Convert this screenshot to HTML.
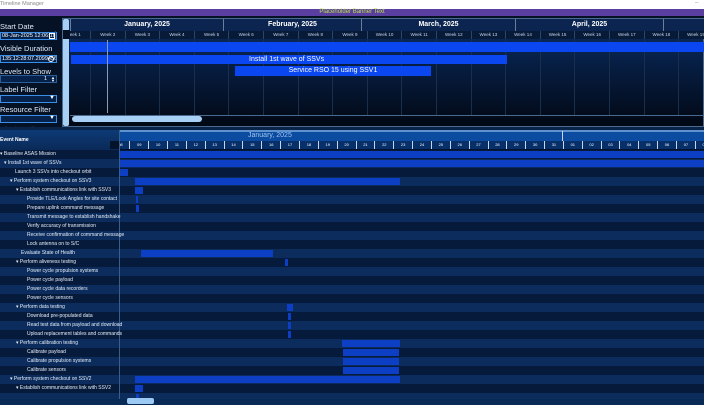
<!DOCTYPE html>
<html><head><meta charset="utf-8">
<style>
*{margin:0;padding:0;box-sizing:border-box}
body{width:704px;height:405px;overflow:hidden;background:#04122a;font-family:"Liberation Sans",sans-serif;position:relative;color:#fff}
.a{position:absolute}
.lbl{font-size:7.5px;color:#dfe8f5;white-space:nowrap}
.inp{position:absolute;left:0;width:57px;height:8px;border:1px solid #3a8ee8;background:#06214a;font-size:5.5px;line-height:6px;color:#fff;padding-left:1px;white-space:nowrap;overflow:hidden}
.wk{position:absolute;top:31px;height:8px;font-size:4.5px;line-height:8px;color:#c8d4e6;text-align:center;width:34.6px;border-left:1px solid #2c4566}
.mo{position:absolute;top:19px;height:12px;font-size:7px;font-weight:bold;line-height:12px;text-align:center;color:#fff;border-left:1px solid #6b7f99;background:#0b2550}
.gl{position:absolute;top:40px;height:75px;width:1px;background:#1a2f4c}
.row{position:absolute;left:0;width:704px;height:9px}
.e{background:#061a3b}.o{background:#0b2c5c}
.nm{position:absolute;font-size:5px;line-height:9px;color:#e6eef8;white-space:nowrap}
.bar{position:absolute;height:7px;background:#0c3fc4}
.day{position:absolute;top:141px;height:8px;width:18.85px;border-left:1px solid #c9d6ea;font-size:4px;line-height:8px;text-align:center;color:#fff}
</style></head><body>
<div class="a" style="left:0;top:0;width:704px;height:9px;background:#fff"></div>
<div class="a" style="left:0;top:1px;font-size:5.5px;color:#888">Timeline Manager</div>
<div class="a" style="left:695px;top:0;font-size:6px;color:#999">–</div>
<div class="a" style="left:0;top:9px;width:704px;height:7px;background:#5a3ea0"></div>
<div class="a" style="left:0;top:9px;width:704px;text-align:center;font-size:6px;line-height:7px;color:#b8e04a">Placeholder Banner Text</div>
<div class="a" style="left:0;top:16px;width:704px;height:114px;background:#051226"></div>

<div class="a lbl" style="left:0;top:22px">Start Date</div>
<div class="inp" style="top:32px">08-Jan-2025 12:06:182</div>
<div class="a" style="left:49px;top:33px;width:6px;height:6px;border:1px solid #fff"></div>
<div class="a lbl" style="left:0;top:44px">Visible Duration</div>
<div class="inp" style="top:55px">135:12:28:07.2099456</div>
<div class="a" style="left:48px;top:56px;width:6px;height:6px;border:1px solid #fff;border-radius:50%"></div>
<div class="a lbl" style="left:0;top:67px">Levels to Show</div>
<div class="inp" style="top:75px;text-align:right;padding-right:9px;border-color:#2b5d9a">1</div>
<div class="a" style="left:51px;top:76px;font-size:4px;line-height:3px;color:#fff">▲<br>▼</div>
<div class="a lbl" style="left:0;top:85px">Label Filter</div>
<div class="inp" style="top:95px"></div>
<div class="a" style="left:49px;top:95px;font-size:6px;color:#fff">▼</div>
<div class="a lbl" style="left:0;top:105px">Resource Filter</div>
<div class="inp" style="top:115px"></div>
<div class="a" style="left:49px;top:115px;font-size:6px;color:#fff">▼</div>
<div class="a lbl" style="left:0;top:125px;color:#556">Display Filter</div>

<div class="a" style="left:62px;top:18px;width:642px;height:109px;border:1px solid #4a6a90;background:linear-gradient(#0c2d63 0%,#071f45 40%,#020814 100%)"></div>
<div class="a" style="left:63px;top:19px;width:6px;height:107px;background:#a8d0f5;border-radius:2px"></div>
<div class="mo" style="left:70px;width:153px">January, 2025</div>
<div class="mo" style="left:223px;width:138px">February, 2025</div>
<div class="mo" style="left:361px;width:154px">March, 2025</div>
<div class="mo" style="left:515px;width:148px">April, 2025</div>
<div class="mo" style="left:663px;width:41px"></div>
<div class="a" style="left:70px;top:31px;width:634px;height:8px;background:#071a38"></div>
<div class="wk" style="left:55.4px">Week 1</div>
<div class="wk" style="left:90px">Week 2</div>
<div class="wk" style="left:124.6px">Week 3</div>
<div class="wk" style="left:159.2px">Week 4</div>
<div class="wk" style="left:193.8px">Week 5</div>
<div class="wk" style="left:228.4px">Week 6</div>
<div class="wk" style="left:263px">Week 7</div>
<div class="wk" style="left:297.6px">Week 8</div>
<div class="wk" style="left:332.2px">Week 9</div>
<div class="wk" style="left:366.8px">Week 10</div>
<div class="wk" style="left:401.4px">Week 11</div>
<div class="wk" style="left:436px">Week 12</div>
<div class="wk" style="left:470.6px">Week 13</div>
<div class="wk" style="left:505.2px">Week 14</div>
<div class="wk" style="left:539.8px">Week 15</div>
<div class="wk" style="left:574.4px">Week 16</div>
<div class="wk" style="left:609px">Week 17</div>
<div class="wk" style="left:643.6px">Week 18</div>
<div class="wk" style="left:678.2px">Week 19</div>
<div class="a" style="left:63px;top:30px;width:7px;height:9px;background:#051226"></div>
<div class="gl" style="left:90px"></div><div class="gl" style="left:125px"></div><div class="gl" style="left:159px"></div><div class="gl" style="left:194px"></div><div class="gl" style="left:228px"></div><div class="gl" style="left:263px"></div><div class="gl" style="left:298px"></div><div class="gl" style="left:332px"></div><div class="gl" style="left:367px"></div><div class="gl" style="left:401px"></div><div class="gl" style="left:436px"></div><div class="gl" style="left:471px"></div><div class="gl" style="left:505px"></div><div class="gl" style="left:540px"></div><div class="gl" style="left:574px"></div><div class="gl" style="left:609px"></div><div class="gl" style="left:644px"></div><div class="gl" style="left:678px"></div>
<div class="a" style="left:70px;top:42px;width:634px;height:10px;background:#0a47f0"></div>
<div class="a" style="left:71px;top:55px;width:436px;height:9px;background:#0a47f0;font-size:7px;line-height:9px;padding-left:178px;white-space:nowrap">Install 1st wave of SSVs</div>
<div class="a" style="left:235px;top:66px;width:196px;height:10px;background:#0a47f0;font-size:7px;line-height:10px;text-align:center;white-space:nowrap">Service RSO 15 using SSV1</div>
<div class="a" style="left:107px;top:40px;width:1px;height:73px;background:#8a9cb5"></div>
<div class="a" style="left:70px;top:115px;width:634px;height:1px;background:#4a6a90"></div>
<div class="a" style="left:72px;top:116px;width:130px;height:6px;background:#a8d0f5;border-radius:3px"></div>
<div class="a" style="left:0;top:127px;width:704px;height:3px;background:#0a2348"></div>

<div class="a" style="left:0;top:130px;width:119px;height:20px;background:linear-gradient(#0d3a76,#0a2a58)"></div>
<div class="a" style="left:0;top:137px;font-size:5px;font-weight:bold;color:#fff">Event Name</div>
<div class="a" style="left:120px;top:130px;width:584px;height:11px;background:linear-gradient(#5f93cf 0,#5f93cf 2px,#0b4ba0 2px)"></div>
<div class="a" style="left:248px;top:130px;font-size:7px;line-height:11px;color:#9ec6f0">January, 2025</div>
<div class="a" style="left:562px;top:131px;width:1px;height:18px;background:#c9d6ea"></div>
<div class="a" style="left:120px;top:141px;width:584px;height:8px;background:#07306a"></div>
<div class="day" style="left:110.5px">08</div><div class="day" style="left:129.3px">09</div><div class="day" style="left:148.2px">10</div><div class="day" style="left:167px">11</div><div class="day" style="left:185.9px">12</div><div class="day" style="left:204.7px">13</div><div class="day" style="left:223.6px">14</div><div class="day" style="left:242.4px">15</div><div class="day" style="left:261.3px">16</div><div class="day" style="left:280.1px">17</div><div class="day" style="left:299px">18</div><div class="day" style="left:317.8px">19</div><div class="day" style="left:336.7px">20</div><div class="day" style="left:355.5px">21</div><div class="day" style="left:374.4px">22</div><div class="day" style="left:393.2px">23</div><div class="day" style="left:412.1px">24</div><div class="day" style="left:430.9px">25</div><div class="day" style="left:449.8px">26</div><div class="day" style="left:468.6px">27</div><div class="day" style="left:487.5px">28</div><div class="day" style="left:506.3px">29</div><div class="day" style="left:525.2px">30</div><div class="day" style="left:544px">31</div><div class="day" style="left:562.9px">01</div><div class="day" style="left:581.7px">02</div><div class="day" style="left:600.6px">03</div><div class="day" style="left:619.4px">04</div><div class="day" style="left:638.3px">05</div><div class="day" style="left:657.1px">06</div><div class="day" style="left:676px">07</div><div class="day" style="left:694.8px">08</div>
<div class="a" style="left:110px;top:141px;width:10px;height:8px;background:#04122a"></div>

<div class="row e" style="top:150px"></div>
<div class="row o" style="top:159px"></div>
<div class="row e" style="top:168px"></div>
<div class="row o" style="top:177px"></div>
<div class="row e" style="top:186px"></div>
<div class="row o" style="top:195px"></div>
<div class="row e" style="top:204px"></div>
<div class="row o" style="top:213px"></div>
<div class="row e" style="top:222px"></div>
<div class="row o" style="top:231px"></div>
<div class="row e" style="top:240px"></div>
<div class="row o" style="top:249px"></div>
<div class="row e" style="top:258px"></div>
<div class="row o" style="top:267px"></div>
<div class="row e" style="top:276px"></div>
<div class="row o" style="top:285px"></div>
<div class="row e" style="top:294px"></div>
<div class="row o" style="top:303px"></div>
<div class="row e" style="top:312px"></div>
<div class="row o" style="top:321px"></div>
<div class="row e" style="top:330px"></div>
<div class="row o" style="top:339px"></div>
<div class="row e" style="top:348px"></div>
<div class="row o" style="top:357px"></div>
<div class="row e" style="top:366px"></div>
<div class="row o" style="top:375px"></div>
<div class="row e" style="top:384px"></div>
<div class="row o" style="top:393px"></div>
<div class="a" style="left:119px;top:130px;width:1px;height:275px;background:#3c5e8a"></div>

<div class="nm" style="left:0;top:150px">▾ Baseline ASAS Mission</div>
<div class="nm" style="left:4px;top:159px">▾ Install 1st wave of SSVs</div>
<div class="nm" style="left:15px;top:168px">Launch 3 SSVs into checkout orbit</div>
<div class="nm" style="left:10px;top:177px">▾ Perform system checkout on SSV3</div>
<div class="nm" style="left:16px;top:186px">▾ Establish communications link with SSV3</div>
<div class="nm" style="left:27px;top:195px">Provide TLE/Look Angles for site contact</div>
<div class="nm" style="left:27px;top:204px">Prepare uplink command message</div>
<div class="nm" style="left:27px;top:213px">Transmit message to establish handshake</div>
<div class="nm" style="left:27px;top:222px">Verify accuracy of transmission</div>
<div class="nm" style="left:27px;top:231px">Receive confirmation of command message</div>
<div class="nm" style="left:27px;top:240px">Lock antenna on to S/C</div>
<div class="nm" style="left:21px;top:249px">Evaluate State of Health</div>
<div class="nm" style="left:16px;top:258px">▾ Perform aliveness testing</div>
<div class="nm" style="left:27px;top:267px">Power cycle propulsion systems</div>
<div class="nm" style="left:27px;top:276px">Power cycle payload</div>
<div class="nm" style="left:27px;top:285px">Power cycle data recorders</div>
<div class="nm" style="left:27px;top:294px">Power cycle sensors</div>
<div class="nm" style="left:16px;top:303px">▾ Perform data testing</div>
<div class="nm" style="left:27px;top:312px">Download pre-populated data</div>
<div class="nm" style="left:27px;top:321px">Read test data from payload and download</div>
<div class="nm" style="left:27px;top:330px">Upload replacement tables and commands</div>
<div class="nm" style="left:16px;top:339px">▾ Perform calibration testing</div>
<div class="nm" style="left:27px;top:348px">Calibrate payload</div>
<div class="nm" style="left:27px;top:357px">Calibrate propulsion systems</div>
<div class="nm" style="left:27px;top:366px">Calibrate sensors</div>
<div class="nm" style="left:10px;top:375px">▾ Perform system checkout on SSV2</div>
<div class="nm" style="left:16px;top:384px">▾ Establish communications link with SSV2</div>

<div class="bar" style="left:120px;top:151px;width:584px"></div>
<div class="bar" style="left:120px;top:160px;width:584px"></div>
<div class="bar" style="left:120px;top:169px;width:8px"></div>
<div class="bar" style="left:135px;top:178px;width:265px"></div>
<div class="bar" style="left:135px;top:187px;width:8px"></div>
<div class="bar" style="left:136px;top:196px;width:2px"></div>
<div class="bar" style="left:136px;top:205px;width:3px"></div>
<div class="bar" style="left:141px;top:250px;width:132px"></div>
<div class="bar" style="left:285px;top:259px;width:3px"></div>
<div class="bar" style="left:287px;top:304px;width:6px"></div>
<div class="bar" style="left:288px;top:313px;width:3px"></div>
<div class="bar" style="left:288px;top:322px;width:3px"></div>
<div class="bar" style="left:288px;top:331px;width:3px"></div>
<div class="bar" style="left:342px;top:340px;width:58px"></div>
<div class="bar" style="left:343px;top:349px;width:56px"></div>
<div class="bar" style="left:343px;top:358px;width:56px"></div>
<div class="bar" style="left:343px;top:367px;width:56px"></div>
<div class="bar" style="left:135px;top:376px;width:265px"></div>
<div class="bar" style="left:135px;top:385px;width:8px"></div>
<div class="bar" style="left:136px;top:394px;width:3px"></div>

<div class="a" style="left:0;top:399px;width:704px;height:6px;background:#0a2a56"></div>
<div class="a" style="left:127px;top:398px;width:27px;height:6px;background:#9ccaf2;border-radius:2px"></div>
</body></html>
